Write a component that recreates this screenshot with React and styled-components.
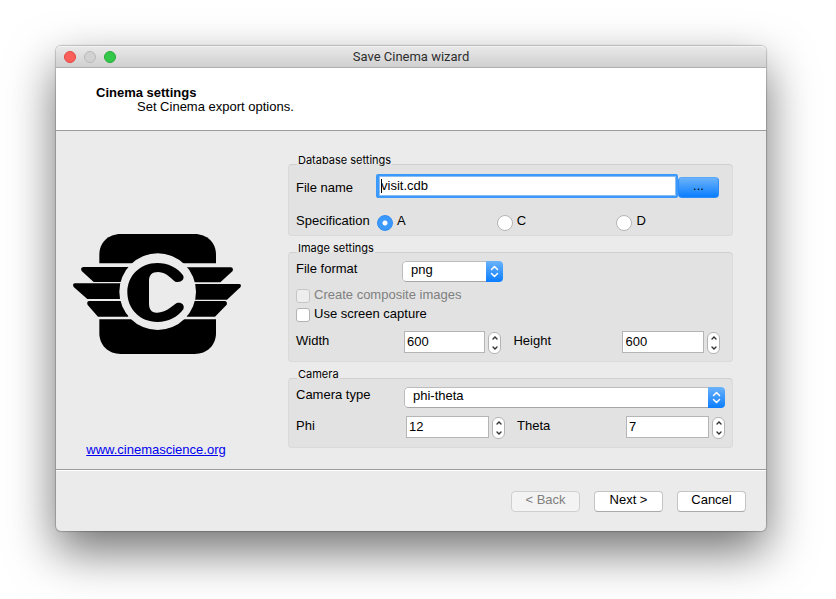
import React, { useState } from "react";
import styled, { createGlobalStyle, css } from "styled-components";

const GlobalStyle = createGlobalStyle`
  * { box-sizing: border-box; }
  body {
    margin: 0;
    background: #fff;
    color: #000;
    font: 13px/14px "Liberation Sans", Arial, sans-serif;
  }
  button, input, select { font: inherit; color: inherit; margin: 0; }
`;

const Desktop = styled.div`
  padding: 46px 70px 68px 56px;
  overflow: hidden;
`;

const Window = styled.main`
  display: flex;
  flex-direction: column;
  border-radius: 5px;
  background: #ebebeb;
  box-shadow: 0 0 1px 1px rgba(0, 0, 0, 0.2), 0 20px 48px rgba(0, 0, 0, 0.56);
`;

const TitleBar = styled.header`
  display: grid;
  grid-template-columns: 1fr auto 1fr;
  align-items: center;
  height: 22px;
  padding: 0 8px;
  border-radius: 5px 5px 0 0;
  border-bottom: 1px solid #b0b0b0;
  background: linear-gradient(#e9e9e9, #d0d0d0);
  box-shadow: inset 0 1px #f4f4f4;
`;

const Lights = styled.div`
  display: flex;
  gap: 8px;
`;

const lightColors = {
  close: ["#fc605b", "#e2463f"],
  minimize: ["#d1d1d1", "#b9b9b9"],
  zoom: ["#34c84a", "#26ab35"],
};

const Light = styled.button`
  width: 12px;
  height: 12px;
  padding: 0;
  border-radius: 50%;
  background: ${(p) => lightColors[p.$kind][0]};
  border: 1px solid ${(p) => lightColors[p.$kind][1]};
`;

const WindowTitle = styled.h1`
  margin: 0;
  font: 400 13px/16px Roboto, sans-serif;
  color: #2e2e2e;
`;

const PageHeader = styled.section`
  padding: 18px 40px 16px;
  background: #fff;
  border-bottom: 1px solid #9b9b9b;
`;

const PageTitle = styled.h2`
  margin: 0;
  font-size: 13px;
  line-height: 14px;
`;

const PageSubtitle = styled.p`
  margin: 0 0 0 41px;
`;

const Body = styled.div`
  display: grid;
  grid-template-columns: 200px 1fr;
  gap: 32px;
  padding: 24px 33px 21px 0;
  border-bottom: 1px solid #9b9b9b;
`;

const Side = styled.aside`
  display: flex;
  flex-direction: column;
  align-items: center;
  justify-content: space-between;
  padding-top: 79px;

  a {
    margin-bottom: -9px;
    color: #0000ee;
  }
`;

const Form = styled.form`
  display: flex;
  flex-direction: column;
  gap: 7px;
`;

const Group = styled.fieldset`
  display: flex;
  flex-direction: column;
  min-width: 0;
  margin: 0;
  padding: 0 ${(p) => p.$right}px ${(p) => p.$bottom}px 7px;
  border: 1px solid #dadada;
  border-top-color: #d0d0d0;
  border-radius: 4px;
  background: #e2e2e2;
`;

const Legend = styled.legend`
  margin-left: 1px;
  padding: 0 1px 8px;
  font: 11px/10px Inter, sans-serif;
`;

const Row = styled.div`
  display: flex;
  align-items: center;
  margin-top: ${(p) => p.$top || 0}px;
`;

const Label = styled.label`
  flex: none;
  width: ${(p) => p.$width}px;
  padding-top: ${(p) => p.$drop || 0}px;
  padding-bottom: ${(p) => p.$lift || 0}px;
`;

const FileField = styled.div`
  position: relative;
  flex: 1;
  min-width: 0;
`;

const FileInput = styled.input`
  display: block;
  width: 100%;
  height: 24px;
  padding: 0 2px 2px;
  border: 2px solid #3b99fc;
  border-left-width: 3px;
  border-radius: 2px;
  background: #fff;
  outline: none;
  box-shadow: inset 0 0 0 1px #8bbdf2;
`;

const Caret = styled.span`
  position: absolute;
  left: 5px;
  top: 5px;
  width: 1px;
  height: 14px;
  background: #000;
`;

const BrowseButton = styled.button`
  align-self: flex-end;
  width: 41px;
  height: 21px;
  padding: 0 0 3px;
  border: 1px solid #2d8cf8;
  border-top-color: #58a9f8;
  border-radius: 4px;
  background: linear-gradient(#6bb3fa, #0a7dff);
`;

const Choices = styled.div`
  display: grid;
  grid-template-columns: 7fr 7fr 6fr;
  flex: 1;
`;

const Choice = styled.label`
  display: flex;
  align-items: center;
  gap: 4px;
  color: ${(p) => (p.$muted ? "#808080" : "inherit")};

  span { padding-bottom: ${(p) => p.$lift || 0}px; }
`;

const Radio = styled.input`
  appearance: none;
  width: 16px;
  height: 16px;
  border: 1px solid #b5b5b5;
  border-radius: 50%;
  background: #fff;

  &:checked {
    border-color: #2f8df5;
    background: radial-gradient(circle, #fff 0 2px, #3b99fc 3px);
  }
`;

const Checkbox = styled.input`
  appearance: none;
  width: 14px;
  height: 14px;
  border: 1px solid #b3b3b3;
  border-radius: 3px;
  background: #fff;

  &:checked { background: #3b99fc; }
  &:disabled {
    border-color: #c6c6c6;
    background: #eee;
  }
`;

const SelectBox = styled.div`
  display: flex;
  height: 21px;
  border-radius: 4px;
  overflow: hidden;
  background: #fff;
  ${(p) => (p.$wide ? css`flex: 1;` : css`width: 101px;`)}

  select {
    appearance: none;
    flex: 1;
    min-width: 0;
    padding: 0 8px 4px;
    border: 1px solid #bcbcbc;
    border-right: 0;
    border-bottom-color: #a6a6a6;
    border-radius: 4px 0 0 4px;
    background: #fff;
    line-height: 15px;
  }
`;

const SelectArrows = styled.span`
  display: grid;
  place-items: center;
  width: 17px;
  background: linear-gradient(#6bb3fa, #0a7dff);
`;

const SpinPair = styled.div`
  display: grid;
  grid-template-columns: ${(p) => p.$label}px minmax(0, 110fr) 109px minmax(0, 98fr);
  margin-top: 7px;
`;

const PairLabel = styled.label`
  padding-top: 4px;
`;

const Spin = styled.div`
  display: flex;
  align-items: center;
  gap: 3px;
  margin-right: ${(p) => (p.$first ? 12 : 0)}px;
`;

const NumberInput = styled.input`
  appearance: textfield;
  flex: 1;
  min-width: 0;
  height: 22px;
  padding: 0 2px 1px;
  border: 1px solid #b5b5b5;
  border-radius: 0;
  background: #fff;

  &::-webkit-inner-spin-button,
  &::-webkit-outer-spin-button { appearance: none; margin: 0; }
`;

const Stepper = styled.div`
  display: flex;
  flex-direction: column;
  width: 13px;
  height: 22px;
  margin-top: 2px;
  border: 1px solid #b4b4b4;
  border-radius: 6px;
  background: #fff;
`;

const StepButton = styled.button`
  display: grid;
  place-items: center;
  flex: 1;
  padding: 0;
  border: 0;
  background: none;
`;

const Footer = styled.footer`
  display: flex;
  justify-content: flex-end;
  gap: 14px;
  padding: 20px 20px 19px;
  border-top: 1px solid #fff;
  border-radius: 0 0 5px 5px;
`;

const PushButton = styled.button`
  width: 69px;
  height: 21px;
  padding: 0 0 3px;
  border: 1px solid #c4c4c4;
  border-bottom-color: #a9a9a9;
  border-radius: 4px;
  background: #fff;

  &:disabled {
    color: #808080;
    border-color: #cfcfcf;
    background: #f3f3f3;
  }
`;

function Chevron({ down }) {
  return (
    <svg width="6" height="4" viewBox="0 0 6 4" fill="none" stroke="#333" strokeWidth="1.4" strokeLinecap="round">
      <path d={down ? "M1 1L3 3L5 1" : "M1 3L3 1L5 3"} />
    </svg>
  );
}

function CinemaLogo() {
  return (
    <svg width="170" height="120" viewBox="33 42 510 360" role="img" aria-label="Cinema">
      <path d="M118 130V104C118 68 145 42 182 42H404C441 42 468 68 468 104V130Z" />
      <path d="M118 298V340C118 376 145 402 182 402H404C441 402 468 376 468 340V298Z" />
      <path d="M70 141H215V186H101L65 153Q60 143 70 141Z" />
      <path d="M373 142H513Q521 144 518 153L481 187H373Z" />
      <path d="M44 190H190V237H82L41 201Q36 192 44 190Z" />
      <path d="M396 192H538Q546 194 541 202L501 239H396Z" />
      <path d="M87 243H205V290H114L83 255Q79 245 87 243Z" />
      <path d="M380 243H495Q503 245 500 254L465 290H380Z" />
      <circle cx="293" cy="215" r="115" fill="#ebebeb" />
      <path d="M369 166C352 142 323 129 292 129C240 129 202 168 202 217C202 267 240 306 292 306C325 306 353 291 370 268C376 254 361 245 349 250C332 261 319 277 292 278C274 279 267 268 267 250V185C267 165 275 156 295 156C321 158 333 176 346 185C361 190 376 179 369 166Z" />
    </svg>
  );
}

function Select({ id, wide, options }) {
  return (
    <SelectBox $wide={wide}>
      <select id={id}>
        {options.map((o) => <option key={o}>{o}</option>)}
      </select>
      <SelectArrows aria-hidden="true">
        <svg width="9" height="13" viewBox="0 0 9 13" fill="none" stroke="#fff" strokeWidth="1.5" strokeLinecap="round" strokeLinejoin="round">
          <path d="M1.5 4.5L4.5 1.5L7.5 4.5M1.5 8.5L4.5 11.5L7.5 8.5" />
        </svg>
      </SelectArrows>
    </SelectBox>
  );
}

function NumberField({ id, label, initial, first }) {
  const [value, setValue] = useState(initial);
  return (
    <>
      <PairLabel htmlFor={id}>{label}</PairLabel>
      <Spin $first={first}>
        <NumberInput id={id} type="number" value={value} onChange={(e) => setValue(Number(e.target.value))} />
        <Stepper>
          <StepButton type="button" aria-label={`Increase ${label}`} onClick={() => setValue(value + 1)}>
            <Chevron />
          </StepButton>
          <StepButton type="button" aria-label={`Decrease ${label}`} onClick={() => setValue(value - 1)}>
            <Chevron down />
          </StepButton>
        </Stepper>
      </Spin>
    </>
  );
}

export default function App() {
  return (
    <Desktop>
      <GlobalStyle />
      <Window>
        <TitleBar>
          <Lights>
            <Light $kind="close" aria-label="Close" />
            <Light $kind="minimize" aria-label="Minimize" disabled />
            <Light $kind="zoom" aria-label="Zoom" />
          </Lights>
          <WindowTitle>Save Cinema wizard</WindowTitle>
        </TitleBar>
        <PageHeader>
          <PageTitle>Cinema settings</PageTitle>
          <PageSubtitle>Set Cinema export options.</PageSubtitle>
        </PageHeader>
        <Body>
          <Side>
            <CinemaLogo />
            <a href="#cinemascience">www.cinemascience.org</a>
          </Side>
          <Form>
            <Group $right={13} $bottom={3}>
              <Legend>Database settings</Legend>
              <Row $top={1}>
                <Label htmlFor="file-name" $width={80} $drop={4}>File name</Label>
                <FileField>
                  <FileInput id="file-name" type="text" defaultValue="visit.cdb" />
                  <Caret aria-hidden="true" />
                </FileField>
                <BrowseButton type="button" aria-label="Browse">...</BrowseButton>
              </Row>
              <Row $top={16} role="radiogroup" aria-labelledby="spec-label">
                <Label as="span" id="spec-label" $width={81} $lift={4}>Specification</Label>
                <Choices>
                  {["A", "C", "D"].map((s) => (
                    <Choice key={s} $lift={4}>
                      <Radio type="radio" name="spec" defaultChecked={s === "A"} />
                      <span>{s}</span>
                    </Choice>
                  ))}
                </Choices>
              </Row>
            </Group>
            <Group $right={12} $bottom={7}>
              <Legend>Image settings</Legend>
              <Row>
                <Label htmlFor="file-format" $width={106} $lift={6}>File format</Label>
                <Select id="file-format" options={["png", "jpeg", "tiff"]} />
              </Row>
              <Row $top={6}>
                <Choice $muted $lift={2}>
                  <Checkbox type="checkbox" disabled />
                  <span>Create composite images</span>
                </Choice>
              </Row>
              <Row $top={3}>
                <Choice $lift={2}>
                  <Checkbox type="checkbox" />
                  <span>Use screen capture</span>
                </Choice>
              </Row>
              <SpinPair $label={108}>
                <NumberField id="width" label="Width" initial={600} first />
                <NumberField id="height" label="Height" initial={600} />
              </SpinPair>
            </Group>
            <Group $right={7} $bottom={8}>
              <Legend>Camera</Legend>
              <Row>
                <Label htmlFor="camera-type" $width={108} $lift={6}>Camera type</Label>
                <Select id="camera-type" wide options={["phi-theta", "static"]} />
              </Row>
              <SpinPair $label={110}>
                <NumberField id="phi" label="Phi" initial={12} first />
                <NumberField id="theta" label="Theta" initial={7} />
              </SpinPair>
            </Group>
          </Form>
        </Body>
        <Footer>
          <PushButton type="button" disabled>&lt; Back</PushButton>
          <PushButton type="button">Next &gt;</PushButton>
          <PushButton type="button">Cancel</PushButton>
        </Footer>
      </Window>
    </Desktop>
  );
}
